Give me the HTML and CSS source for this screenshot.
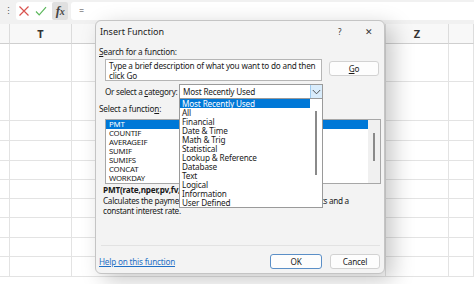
FILE: index.html
```html
<!DOCTYPE html>
<html>
<head>
<meta charset="utf-8">
<link rel="stylesheet" href="styles.css">
</head>
<body>
<div class="app">
  <div class="toolbar">
    <span class="grip">&#8942;</span>
    <div class="iconbox">
      <svg class="ic" width="12" height="12" viewBox="0 0 12 12"><path d="M1.5 1.5 L10.5 10.5 M10.5 1.5 L1.5 10.5" stroke="#d9534f" stroke-width="1.2" fill="none"/></svg>
      <svg class="ic" width="12" height="12" viewBox="0 0 12 12"><path d="M1 6.5 L4.2 9.8 L11 2.2" stroke="#5cb85c" stroke-width="1.2" fill="none"/></svg>
      <span class="fx"><i>f</i><i class="x">x</i></span>
    </div>
    <div class="formula">=</div>
  </div>
  <div class="sheet">
    <div class="hdr c0"></div><div class="hdr c1">T</div><div class="hdr c2"></div><div class="hdr c3">Z</div><div class="hdr c4"></div>
    <div class="cell"></div><div class="cell"></div><div class="cell"></div><div class="cell"></div><div class="cell"></div>
    <div class="cell"></div><div class="cell"></div><div class="cell"></div><div class="cell"></div><div class="cell"></div>
    <div class="cell"></div><div class="cell"></div><div class="cell"></div><div class="cell"></div><div class="cell"></div>
    <div class="cell"></div><div class="cell"></div><div class="cell"></div><div class="cell"></div><div class="cell"></div>
    <div class="cell"></div><div class="cell"></div><div class="cell"></div><div class="cell"></div><div class="cell"></div>
    <div class="cell"></div><div class="cell"></div><div class="cell"></div><div class="cell"></div><div class="cell"></div>
    <div class="cell"></div><div class="cell"></div><div class="cell"></div><div class="cell"></div><div class="cell"></div>
    <div class="cell"></div><div class="cell"></div><div class="cell"></div><div class="cell"></div><div class="cell"></div>
    <div class="cell"></div><div class="cell"></div><div class="cell"></div><div class="cell"></div><div class="cell"></div>
    <div class="cell"></div><div class="cell"></div><div class="cell"></div><div class="cell"></div><div class="cell"></div>
  </div>

  <div class="dialog">
    <div class="titlebar">
      <span class="title">Insert Function</span>
      <span class="help">?</span>
      <span class="close">&#x2715;</span>
    </div>
    <div class="dbody">
      <div class="lbl l1"><u>S</u>earch for a function:</div>
      <div class="searchrow">
        <div class="search">Type a brief description of what you want to do and then click Go</div>
        <div class="btn go"><u>G</u>o</div>
      </div>
      <div class="catrow">
        <div class="catlbl">Or select a <u>c</u>ategory:</div>
        <div class="select">
          <span class="selval">Most Recently Used</span>
          <span class="chev"><svg width="9" height="6" viewBox="0 0 9 6"><path d="M0.8 1 L4.5 4.8 L8.2 1" stroke="#444" stroke-width="0.9" fill="none"/></svg></span>
        </div>
      </div>
      <div class="lbl l2">Select a functio<u>n</u>:</div>
      <div class="flist">
        <div class="items">
          <div class="it sel">PMT</div>
          <div class="it">COUNTIF</div>
          <div class="it">AVERAGEIF</div>
          <div class="it">SUMIF</div>
          <div class="it">SUMIFS</div>
          <div class="it">CONCAT</div>
          <div class="it">WORKDAY</div>
        </div>
        <div class="vscroll"><div class="thumb"></div></div>
      </div>
      <div class="sig">PMT(rate,nper,pv,fv,type)</div>
      <div class="desc">Calculates the payment for a loan based on constant payments and a<br>constant interest rate.</div>
      <div class="sep"></div>
      <div class="footer">
        <a class="link">Help on this function</a>
        <div class="btn ok">OK</div>
        <div class="btn cancel">Cancel</div>
      </div>
    </div>
  </div>

  <div class="dropdown">
    <div class="ditems">
      <div class="di sel">Most Recently Used</div>
      <div class="di">All</div>
      <div class="di">Financial</div>
      <div class="di">Date &amp; Time</div>
      <div class="di">Math &amp; Trig</div>
      <div class="di">Statistical</div>
      <div class="di">Lookup &amp; Reference</div>
      <div class="di">Database</div>
      <div class="di">Text</div>
      <div class="di">Logical</div>
      <div class="di">Information</div>
      <div class="di">User Defined</div>
    </div>
    <div class="dscroll"><div class="dthumb"></div></div>
  </div>
</div>
</body>
</html>
```

FILE: styles.css
```css
* { box-sizing: border-box; }
html, body { margin: 0; padding: 0; }
body {
  width: 474px; height: 284px; overflow: hidden;
  font-family: "Noto Sans", "Open Sans", sans-serif;
  color: #1a1a1a;
  background: #fff;
}
.app { position: relative; width: 474px; height: 284px; overflow: hidden; }

.toolbar {
  height: 24px;
  background: #f1f1f1;
  display: flex;
  align-items: flex-start;
  padding-top: 2px;
}
.grip { width: 16px; text-align: center; font-size: 9px; line-height: 18px; color: #555; }
.iconbox {
  width: 52px; height: 18px;
  background: #fff;
  border-radius: 3px;
  display: flex; align-items: center;
  padding-left: 2px;
  gap: 5px;
}
.ic { flex: none; }
.fx {
  margin-left: auto;
  width: 17px; height: 18px;
  background: #e0e0e0;
  border-radius: 2px;
  font-family: "Liberation Serif", serif;
  font-weight: bold;
  font-size: 13px;
  line-height: 17px;
  text-align: center;
  color: #444;
  letter-spacing: -0.5px;
}
.fx .x { font-size: 10px; }
.formula {
  margin-left: 3px;
  flex: 1;
  height: 18px;
  background: #fff;
  border-radius: 3px 0 0 3px;
  font-size: 9px;
  line-height: 18px;
  padding-left: 8px;
  color: #444;
}

.sheet {
  display: grid;
  grid-template-columns: 10px 62px 314px 63px 25px;
  grid-template-rows: 20px 38px 39px 20px 20px 19px 19px 19px 20px 19px 20px;
}
.hdr {
  background: #f8f8f8;
  border-right: 1px solid #dcdcdc;
  border-bottom: 1px solid #cfcfcf;
  font-size: 11px;
  font-weight: bold;
  text-align: center;
  line-height: 19px;
  color: #333;
}
.cell {
  border-right: 1px solid #e3e3e3;
  border-bottom: 1px solid #e3e3e3;
}

.dialog {
  position: absolute;
  left: 95px; top: 20px;
  width: 290px; height: 254px;
  background: #f3f3f3;
  border: 1px solid #c4c4c4;
  border-radius: 6px;
  box-shadow: 8px 6px 22px rgba(0,0,0,0.22);
  font-size: 8.2px;
  letter-spacing: -0.2px;
}
.titlebar {
  height: 21px;
  display: flex; align-items: center;
  padding-left: 4px;
}
.title { font-size: 9px; color: #222; letter-spacing: 0; }
.help { margin-left: auto; font-size: 8px; color: #333; margin-right: 24px; }
.close { font-size: 9px; color: #333; margin-right: 11px; }
.dbody { padding: 0 4px 0 3px; }
.lbl { line-height: 10px; height: 10px; white-space: nowrap; }
.l1 { margin-top: 5px; }
.searchrow { display: flex; margin-top: 2px; margin-left: 6px; align-items: flex-start; }
.search {
  width: 217px; height: 22px;
  background: #fff;
  border: 1px solid #b5b5b5;
  padding: 1px 1px 0 3px;
  line-height: 9.5px;
}
.btn {
  background: #fdfdfd;
  border: 1px solid #d2d2d2;
  border-radius: 3px;
  text-align: center;
}
.go { width: 50px; height: 15px; margin-left: 7px; margin-top: 2px; line-height: 13px; }
.catrow { display: flex; align-items: center; margin-top: 3px; margin-left: 6px; height: 15px; }
.catlbl { width: 74px; white-space: nowrap; letter-spacing: -0.3px; }
.select {
  width: 144px; height: 15px;
  background: #fff;
  border: 1px solid #9a9a9a;
  display: flex; align-items: center;
  padding-left: 3px;
}
.selval { flex: 1; }
.chev {
  width: 12px; height: 13px;
  background: #d9ecfb;
  border-left: 1px solid #9fcbef;
  display: flex; align-items: center; justify-content: center;
}
.l2 { margin-top: 5px; }
.flist {
  margin-top: 5px; margin-left: 6px;
  width: 276px; height: 65px;
  background: #fff;
  border: 1px solid #a7a7a7;
  display: flex;
}
.items { flex: 1; padding-top: 0; }
.it { height: 9px; line-height: 9px; padding-left: 3px; font-size: 7.8px; }
.it.sel { background: #0078d7; color: #fff; }
.vscroll { width: 12px; background: #f0f0f0; position: relative; }
.thumb { width: 2px; height: 28px; background: #8a8a8a; margin: 13px auto 0; }
.sig { margin-top: 1px; margin-left: 4px; font-weight: bold; line-height: 10px; white-space: nowrap; }
.desc { margin-left: 4px; line-height: 9.5px; margin-top: 1px; letter-spacing: -0.3px; }
.sep { height: 1px; background: #e2e2e2; margin-top: 30px; margin-left: 2px; }
.footer { display: flex; align-items: center; margin-top: 8px; }
.link { color: #1f6fc5; text-decoration: underline; flex: 1; }
.ok { width: 52px; height: 15px; line-height: 13px; border: 1px solid #5b8fc7; }
.cancel { width: 50px; height: 15px; line-height: 13px; margin-left: 8px; }

.dropdown {
  position: absolute;
  left: 179px; top: 98px;
  width: 144px; height: 110px;
  background: #fff;
  border: 1px solid #9a9a9a;
  display: flex;
  font-size: 8.2px;
  letter-spacing: -0.15px;
}
.ditems { flex: 1; }
.di { height: 9px; line-height: 9px; padding-left: 2px; white-space: nowrap; }
.di.sel { background: #0078d7; color: #fff; }
.dscroll { width: 12px; position: relative; }
.dthumb { width: 2px; height: 64px; background: #8a8a8a; margin: 12px auto 0; }
```
